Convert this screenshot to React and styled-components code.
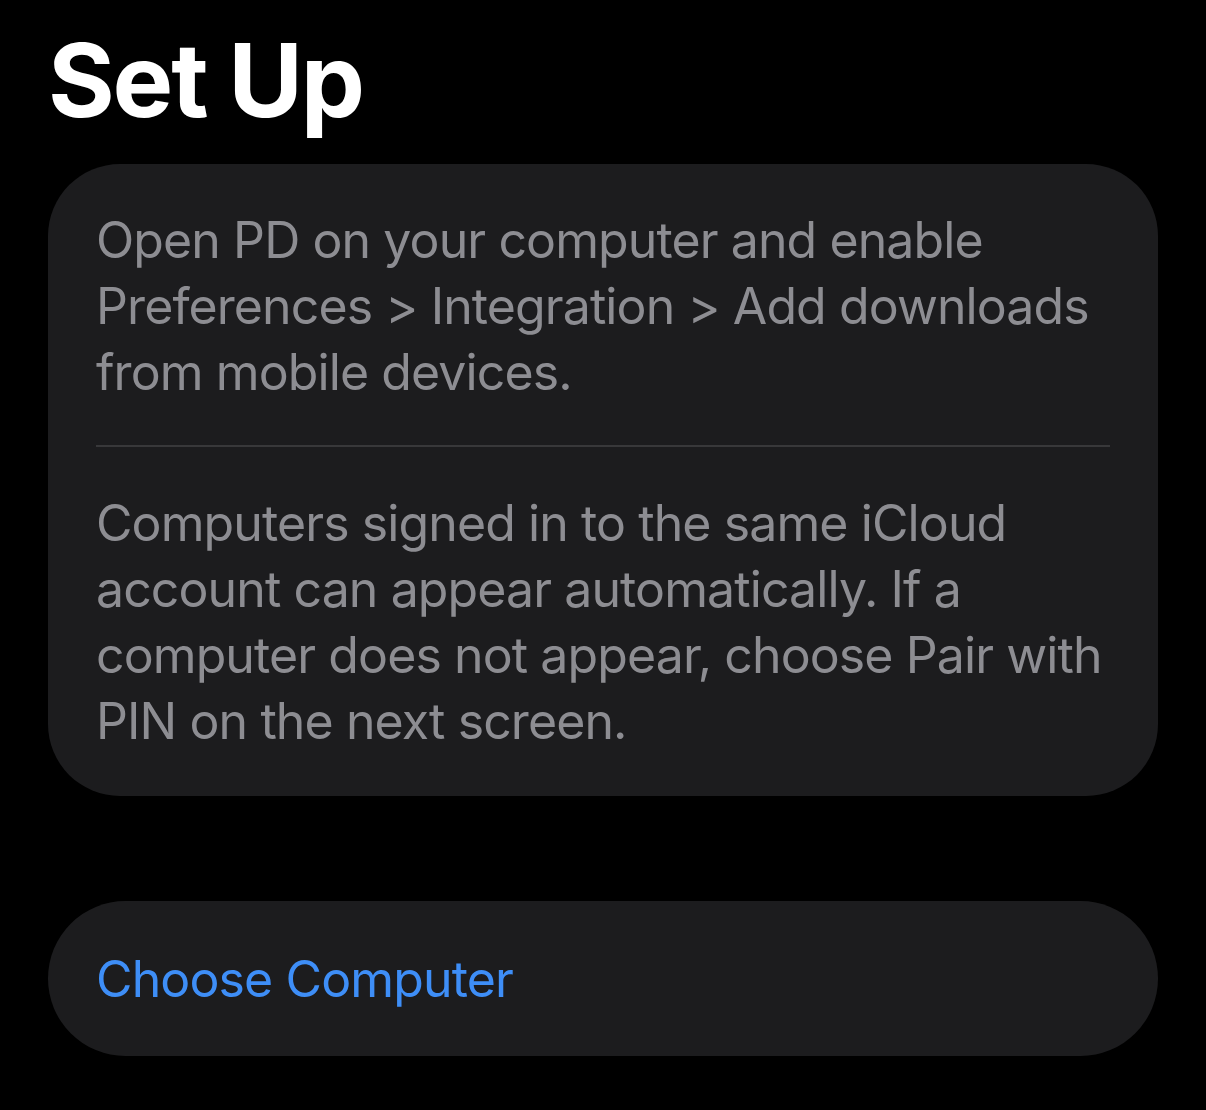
import styled, { createGlobalStyle } from 'styled-components';

const GlobalStyle = createGlobalStyle`
  html, body {
    margin: 0;
    padding: 0;
    background: #000;
  }
  body {
    font-family: Inter, "Noto Sans", "Liberation Sans", sans-serif;
    -webkit-font-smoothing: antialiased;
  }
`;

const Screen = styled.div`
  width: 1206px;
  height: 1110px;
  background: #000;
  padding: 0 48px;
  box-sizing: border-box;
  display: flex;
  flex-direction: column;
`;

const Title = styled.h1`
  margin: 25px 0 29px 0;
  font-size: 102px;
  line-height: 110px;
  font-weight: 700;
  letter-spacing: -2.2px;
  color: #fff;
`;

const Card = styled.div`
  background: #1c1c1e;
  border-radius: 72px;
  padding: 43px 48px 42px 48px;
  display: flex;
  flex-direction: column;
`;

const Paragraph = styled.p`
  margin: 0;
  font-size: 50px;
  line-height: 66px;
  color: #8d8d92;
  letter-spacing: -0.9px;
`;

const Divider = styled.div`
  height: 2px;
  background: #38383a;
  margin: 40px 0 43px 0;
`;

const Button = styled.button`
  margin-top: 105px;
  height: 155px;
  border: none;
  border-radius: 78px;
  background: #1c1c1e;
  padding: 0 48px;
  text-align: left;
  font-family: inherit;
  font-size: 50px;
  color: #3e8ef7;
  letter-spacing: -0.87px;
  cursor: pointer;
`;

export default function App() {
  return (
    <>
      <GlobalStyle />
      <Screen>
        <Title>Set Up</Title>
        <Card>
          <Paragraph>
            Open PD on your computer and enable Preferences &gt; Integration &gt; Add
            downloads from mobile devices.
          </Paragraph>
          <Divider />
          <Paragraph>
            Computers signed in to the same iCloud account can appear automatically.
            If a computer does not appear, choose Pair with PIN on the next screen.
          </Paragraph>
        </Card>
        <Button>Choose Computer</Button>
      </Screen>
    </>
  );
}
